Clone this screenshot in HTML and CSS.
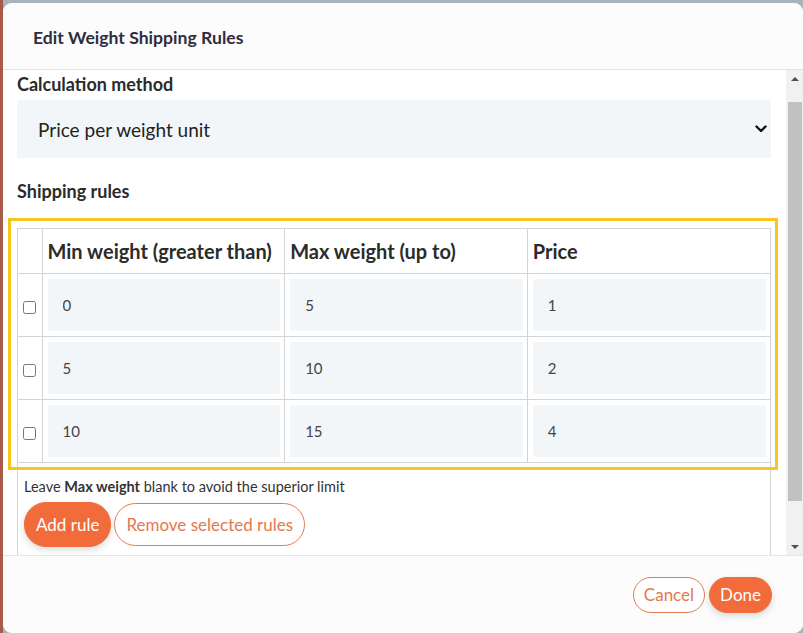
FILE: index.html
```html
<!DOCTYPE html>
<html lang="en">
<head>
    <meta charset="UTF-8">
    <meta name="viewport" content="width=device-width, initial-scale=1.0">
    <title>Edit Weight Shipping Rules</title>
    <link rel="stylesheet" href="styles.css">
</head>
<body>
    <div class="modal">
        <div class="modal-header">
            <h3>Edit Weight Shipping Rules</h3>
        </div>

        <div class="modal-main">
            <div class="modal-body">
                <label class="field-label" for="calc_method">Calculation method</label>
                <div class="select-wrap">
                    <select id="calc_method" class="select">
                        <option>Price per weight unit</option>
                        <option>Fixed price</option>
                    </select>
                    <svg class="chevron" width="12" height="8" viewBox="0 0 12 8">
                        <path d="M1.5 1.5 L6 6 L10.5 1.5" fill="none" stroke="#111" stroke-width="2.4" stroke-linecap="round" stroke-linejoin="round"/>
                    </svg>
                </div>

                <h4 class="field-label section">Shipping rules</h4>

                <div class="rules-panel">
                    <!-- highlight frame drawn over the table -->
                    <div class="highlight"></div>
                    <table class="rules">
                        <colgroup>
                            <col class="col-check">
                            <col>
                            <col>
                            <col>
                        </colgroup>
                        <thead>
                            <tr>
                                <th></th>
                                <th>Min weight (greater than)</th>
                                <th>Max weight (up to)</th>
                                <th>Price</th>
                            </tr>
                        </thead>
                        <tbody>
                            <tr>
                                <td class="check"><input type="checkbox"></td>
                                <td><input type="text" value="0"></td>
                                <td><input type="text" value="5"></td>
                                <td><input type="text" value="1"></td>
                            </tr>
                            <tr>
                                <td class="check"><input type="checkbox"></td>
                                <td><input type="text" value="5"></td>
                                <td><input type="text" value="10"></td>
                                <td><input type="text" value="2"></td>
                            </tr>
                            <tr>
                                <td class="check"><input type="checkbox"></td>
                                <td><input type="text" value="10"></td>
                                <td><input type="text" value="15"></td>
                                <td><input type="text" value="4"></td>
                            </tr>
                        </tbody>
                    </table>

                    <p class="hint">Leave <b>Max weight</b> blank to avoid the superior limit</p>

                    <div class="panel-actions">
                        <button class="btn btn-fill btn-big">Add rule</button>
                        <button class="btn btn-outline btn-big">Remove selected rules</button>
                    </div>
                </div>
            </div>

            <!-- scrollbar of the dialog body -->
            <div class="scrollbar">
                <span class="sb-btn"><i class="arrow-up"></i></span>
                <span class="sb-track"><span class="sb-thumb"></span></span>
                <span class="sb-btn"><i class="arrow-down"></i></span>
            </div>
        </div>

        <div class="modal-footer">
            <button class="btn btn-outline">Cancel</button>
            <button class="btn btn-fill">Done</button>
        </div>
    </div>

    <script>
        // the dialog body is shown scrolled down a little
        document.querySelector('.modal-body').scrollTop = 20;
    </script>
</body>
</html>
```

FILE: styles.css
```css
html, body {
    height: 100%;
}
body {
    margin: 0;
    overflow: hidden;
    font-family: Lato, "Noto Sans", sans-serif;
    color: #2b2b2b;
    background: linear-gradient(to right, #a85a4b 0, #a85a4b 3px, #a9b2bf 3px);
}

.modal {
    margin: 3px 0 0 3px;
    width: 800px;
    height: 630px;
    background-color: #fff;
    border-radius: 9px;
    display: flex;
    flex-direction: column;
    overflow: hidden;
}

.modal-header {
    flex: none;
    display: flex;
    align-items: center;
    padding: 2px 0 0 30px;
    box-sizing: border-box;
    height: 67px;
    background-color: #fcfcfc;
    border-bottom: 1px solid #e4e4e4;
}
.modal-header h3 {
    margin: 0;
    font-size: 17.6px;
    font-weight: bold;
    color: #2f2d40;
}

.modal-main {
    flex: 1;
    min-height: 0;
    display: flex;
}

.modal-body {
    flex: 1;
    overflow: hidden;
    padding: 23px 15px 31px 14px;
}

.scrollbar {
    flex: none;
    width: 17px;
    display: flex;
    flex-direction: column;
    background-color: #f1f1f1;
}
.sb-btn {
    height: 17px;
    flex: none;
    display: flex;
    align-items: center;
    justify-content: center;
}
.arrow-up,
.arrow-down {
    width: 0;
    height: 0;
    border-left: 4px solid transparent;
    border-right: 4px solid transparent;
}
.arrow-up {
    border-bottom: 4px solid #505050;
}
.arrow-down {
    border-top: 4px solid #505050;
}
.sb-track {
    flex: 1;
    padding-top: 15px;
}
.sb-thumb {
    display: block;
    height: 399px;
    margin: 0 1px 0 2px;
    background-color: #c1c1c1;
}

.field-label {
    display: block;
    margin: 0;
    font-size: 18px;
    line-height: 22px;
    font-weight: bold;
    color: #2b2b2b;
}
.field-label.section {
    margin-top: 22px;
}

.select-wrap {
    position: relative;
    margin-top: 5px;
}
.select {
    display: block;
    width: 100%;
    height: 58px;
    padding: 0 0 0 21px;
    border: none;
    border-radius: 2px;
    background-color: #f3f6f9;
    font-family: inherit;
    font-size: 19px;
    color: #222;
    appearance: none;
    -webkit-appearance: none;
}
.chevron {
    position: absolute;
    right: 4px;
    top: 25px;
    pointer-events: none;
}

.rules-panel {
    position: relative;
    margin-top: 26px;
    border: 1px solid #d4d4d4;
    padding-bottom: 20px;
}
.highlight {
    position: absolute;
    left: -10px;
    top: -11px;
    width: 764px;
    height: 246px;
    border: 3px solid #f6c51e;
    pointer-events: none;
}

.rules {
    width: 100%;
    border-collapse: collapse;
    table-layout: fixed;
}
.col-check {
    width: 24px;
}
.rules th,
.rules td {
    border: 1px solid #d4d4d4;
}
.rules tr > :first-child {
    border-left: none;
}
.rules tr > :last-child {
    border-right: none;
}
.rules thead th {
    border-top: none;
    height: 44px;
    padding: 0 5px;
    text-align: left;
    font-size: 20px;
    font-weight: bold;
    color: #2b2b2b;
}
.rules td {
    padding: 5px 4px 5px 5px;
}
.rules td.check {
    padding: 0;
    text-align: center;
}
.rules td.check input {
    margin: 0;
    width: 13px;
    height: 13px;
    vertical-align: middle;
}
.rules input[type="text"] {
    display: block;
    width: 100%;
    height: 52px;
    box-sizing: border-box;
    padding: 0 0 0 15px;
    border: none;
    border-radius: 2px;
    background-color: #f3f6f9;
    font-family: inherit;
    font-size: 15px;
    color: #444;
}

.hint {
    margin: 14px 0 0 6px;
    font-size: 14.5px;
    line-height: 20px;
    color: #333;
}

.panel-actions {
    display: flex;
    align-items: center;
    gap: 4px;
    margin: 5px 0 0 6px;
}

.btn {
    font-family: inherit;
    font-size: 16px;
    height: 35px;
    padding: 0 10px;
    border-radius: 18px;
    cursor: pointer;
}
.btn-big {
    font-size: 17px;
    height: 43px;
    border-radius: 22px;
    padding: 0 11px;
}
.btn-fill {
    background-color: #f26b3a;
    border: 1px solid #f26b3a;
    color: #fff;
    box-shadow: 0 3px 7px rgba(0, 0, 0, 0.14);
}
.panel-actions .btn-fill {
    height: 45px;
}
.btn-outline {
    background-color: #fff;
    border: 1px solid #e27a55;
    color: #e7764d;
}
.panel-actions .btn-outline {
    margin-left: -1px;
}

.modal-footer {
    flex: none;
    height: 78px;
    box-sizing: border-box;
    display: flex;
    justify-content: flex-end;
    align-items: center;
    gap: 4px;
    padding: 0 31px 0 0;
    background-color: #fcfcfc;
    border-top: 1px solid #e6e6e6;
}
.modal-footer .btn {
    font-size: 17px;
    height: 36px;
}
```
